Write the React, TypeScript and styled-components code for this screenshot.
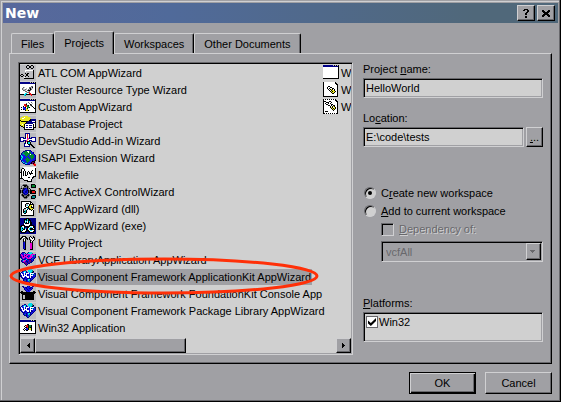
import React from 'react';
import styled, { createGlobalStyle, css } from 'styled-components';

const face = '#a0a0a4';
const paper = '#d0d0d0';
const light = '#d0d0d2';
const shade = '#68686c';
const ink = '#000';

const Global = createGlobalStyle`
  * { box-sizing: border-box; }
  html, body, #root { height: 100%; margin: 0; }
  body, button, input, select {
    font-family: "Liberation Sans", Arial, sans-serif;
    font-size: 11px;
    line-height: 14px;
    color: ${ink};
  }
  button, input, select { margin: 0; padding: 0; border-radius: 0; }
`;

const raised = css`
  background: ${face};
  border: 1px solid;
  border-color: ${light} ${ink} ${ink} ${light};
  box-shadow: inset -1px -1px ${shade};
`;

const sunken = css`
  border: 1px solid;
  border-color: ${shade} ${light} ${light} ${shade};
  box-shadow: inset 1px 1px ${ink}, inset -1px -1px ${face};
`;

const Dialog = styled.main`
  display: flex;
  flex-direction: column;
  min-height: 100%;
  padding: 3px;
  background: ${face};
  box-shadow: inset -1px -1px ${ink}, inset -2px -2px ${shade}, inset 1px 1px ${face}, inset 2px 2px ${light};
`;

const TitleBar = styled.header`
  display: flex;
  align-items: center;
  height: 20px;
  padding: 0 3px 0 2px;
  gap: 2px;
  background: linear-gradient(90deg, #58689c, #506a9a 30%, #50687a 85%);
`;

const Title = styled.h1`
  flex: 1;
  margin: 0;
  color: #fff;
  font: bold 14px/20px "DejaVu Sans", sans-serif;
`;

const CaptionButton = styled.button`
  ${raised}
  display: grid;
  place-items: center;
  width: 18px;
  height: 16px;
`;

const Content = styled.div`
  display: flex;
  flex: 1;
  flex-direction: column;
  padding: 8px 6px 4px;
`;

const Tabs = styled.div`
  display: flex;
  align-items: flex-end;
  padding-left: 2px;
`;

const Tab = styled.button<{ $active?: boolean }>`
  position: relative;
  height: ${p => (p.$active ? 23 : 20)}px;
  margin-bottom: ${p => (p.$active ? -1 : 0)}px;
  padding: 0 9px;
  background: ${face};
  border: 1px solid;
  border-color: ${light} ${ink} transparent ${light};
  border-bottom: 0;
  border-radius: 2px 2px 0 0;
  box-shadow: inset -1px 0 ${shade};
  z-index: ${p => (p.$active ? 1 : 0)};
`;

const Panel = styled.section`
  display: flex;
  gap: 10px;
  padding: 8px;
  border: 1px solid;
  border-color: ${light} ${ink} ${ink} ${light};
  box-shadow: inset -1px -1px ${shade};
`;

const ListArea = styled.div`
  position: relative;
  flex: 1;
  min-width: 0;
`;

const ListBox = styled.div`
  ${sunken}
  display: flex;
  flex-direction: column;
  padding: 1px;
  background: ${paper};
`;

const Columns = styled.ul`
  display: grid;
  grid-template-rows: repeat(16, 17px);
  grid-auto-flow: column;
  grid-auto-columns: 295px;
  gap: 0 8px;
  height: 274px;
  margin: 0;
  padding: 0;
  overflow: hidden;
  list-style: none;
`;

const Item = styled.li`
  display: flex;
  align-items: center;
  gap: 1px;
  white-space: nowrap;
`;

const ItemText = styled.span<{ $selected?: boolean }>`
  padding: 1px;
  background: ${p => (p.$selected ? face : 'transparent')};
`;

const ScrollBar = styled.div`
  display: flex;
  height: 15px;
  background: ${paper};
`;

const ScrollButton = styled.button`
  ${raised}
  display: grid;
  place-items: center;
  width: 15px;
`;

const ScrollTrack = styled.div`
  flex: 1;
`;

const ScrollThumb = styled.div`
  ${raised}
  width: 50%;
  height: 100%;
`;

const Marker = styled.svg`
  position: absolute;
  left: -9px;
  top: 194px;
  width: 310px;
  height: 40px;
  pointer-events: none;
`;

const Side = styled.form`
  display: flex;
  flex-direction: column;
  width: 180px;
`;

const Field = styled.div`
  display: flex;
  flex-direction: column;
  gap: 2px;
  margin-bottom: 13px;
`;

const FieldRow = styled.div`
  display: flex;
  gap: 2px;
`;

const TextBox = styled.input`
  ${sunken}
  flex: 1;
  width: 100%;
  min-width: 0;
  min-height: 20px;
  padding: 0 2px;
  background: ${paper};
  outline: 0;
`;

const Browse = styled.button`
  ${raised}
  width: 17px;
  height: 20px;
`;

const Choices = styled.div`
  display: flex;
  flex-direction: column;
  gap: 4px;
  margin: 26px 0 34px;
`;

const Choice = styled.label<{ $disabled?: boolean }>`
  display: flex;
  align-items: center;
  gap: 5px;
  color: ${p => (p.$disabled ? shade : ink)};
  text-shadow: ${p => (p.$disabled ? `1px 1px ${light}` : 'none')};
`;

const Radio = styled.input`
  appearance: none;
  display: grid;
  place-items: center;
  width: 12px;
  height: 12px;
  margin: 0 0 0 1px;
  background: ${paper};
  border: 1px solid;
  border-color: ${shade} ${light} ${light} ${shade};
  border-radius: 50%;
  box-shadow: inset 1px 1px ${ink};
  &:checked::after {
    content: "";
    width: 4px;
    height: 4px;
    border-radius: 50%;
    background: ${ink};
  }
`;

const Nested = styled.div`
  display: flex;
  flex-direction: column;
  gap: 5px;
  padding-left: 18px;
`;

const Check = styled.input`
  appearance: none;
  display: grid;
  place-items: center;
  width: 13px;
  height: 13px;
  ${sunken}
  background: ${face};
`;

const FlatCheck = styled.input`
  appearance: none;
  display: grid;
  place-items: center;
  width: 12px;
  height: 12px;
  background: #fff;
  border: 1px solid ${shade};
  &:checked::after {
    content: "";
    width: 8px;
    height: 8px;
    background: ${ink};
    clip-path: polygon(0 30%, 36% 62%, 100% 0, 100% 38%, 36% 100%, 0 68%);
  }
`;

const Combo = styled.div`
  ${sunken}
  display: grid;
  grid-template-columns: 1fr 15px;
  height: 21px;
  padding: 1px;
`;

const ComboSelect = styled.select`
  appearance: none;
  grid-area: 1 / 1 / 2 / 3;
  padding: 0 3px;
  background: transparent;
  border: 0;
  opacity: 1;
  color: ${shade};
`;

const ComboArrow = styled.span`
  ${raised}
  grid-area: 1 / 2;
  display: grid;
  place-items: center;
  pointer-events: none;
`;

const PlatformLabel = styled.div`
  margin-bottom: 2px;
`;

const PlatformBox = styled.div`
  ${sunken}
  height: 30px;
  padding: 2px;
  background: ${paper};
`;

const PlatformChoice = styled.label`
  display: flex;
  align-items: center;
  gap: 1px;
`;

const Actions = styled.footer`
  display: flex;
  justify-content: flex-end;
  gap: 9px;
  padding-top: 8px;
`;

const Action = styled.button<{ $primary?: boolean }>`
  ${raised}
  width: 67px;
  height: 22px;
  ${p => p.$primary && css`
    border-color: ${ink};
    box-shadow: inset 1px 1px ${light}, inset -1px -1px ${ink}, inset -2px -2px ${shade};
  `}
`;

const Pixels = styled.svg`
  flex: none;
`;

const palette: Record<string, string> = {
  K: '#000', W: '#fff', D: '#68686c', L: '#bcbcc0', N: '#000088', B: '#1010e8',
  C: '#00e0f0', R: '#e81010', Y: '#e8e820', M: '#e800d0', G: '#008830', T: '#008888', V: '#700070',
};

const art: Record<string, string[]> = {
  atl: [
    'LLLLLLLKKLLKKLLL', 'LLLLLLKLLKKLLKLL', 'LLLLLLKLLKKLLKLL', 'LLLLLLLKKLLKKLLL', 'LLLLLLLLLLLLLLLL',
    'LLLLLWWWWWWWWKLL', 'LLLLLWLLLLLLLKLL', 'LLLLLLLLLLLLLKLL', 'LLLLLKLKKLLLLKLL', 'LKKLLLKKLLLLLKLL',
    'KLLKLLKKLLLLLKLL', 'LKKLLKLLKLLLLKLL', 'LLLLWLLLLLLLLKLL', 'LLLLKKKKKKKKKKLL', 'LLLLLLLLLLLLLLLL', 'LLLLLLLLLLLLLLLL',
  ],
  cluster: [
    'NNNNNNNNNNLKLKLK', 'NNNNNNNNNNNNNNNK', 'WWWWWWWWWWWWWWWK', 'WWWWWWWWWWWWWWWK', 'WWWWWWWWWWWDDWWK', 'WWWDLWWWWDDLKWWK',
    'WWDLWWLWWDKLLWWK', 'WWDLLDLWDLKDWWWK', 'WWWDDLWDKKDWWWWK', 'WWWWWDDWLDWWWWWK', 'WWWWWWLDDRWWWWWK', 'WWWWWCCWWRRWWWWK',
    'KKKKCCKKKKRRKKKK', 'LLLLCTLLLLLRLLLL', 'LLLLLLLLLLLLLLLL', 'LLLLLLLLLLLLLLLL',
  ],
  custom: [
    'NNNNNNNNNNLKLKLK', 'NNNNNNNNNNNNNNNK', 'WWWWWWWWWWWWWWWK', 'WWWWWWWWDWWDWWWK', 'WWWWWWDWWDWWLWWK', 'WWWWRRKWWWKDWWWK',
    'WWWWRRRGKWDKWWWK', 'WWWKWRRGGWWLKWWK', 'WKWBBKWGGKWWWKWK', 'WWWBBBYKWWWWWWKK', 'WKWKBBYYWWWWWWWK', 'WWWWWKYYKWWWWWWK',
    'WWWWWWWWWWWWWWWK', 'KKKKKKKKKKKKKKKK', 'LLLLLLLLLLLLLLLL', 'LLLLLLLLLLLLLLLL',
  ],
  database: [
    'LLLYYYYYLLLLLLLL', 'LYYYWYYYYYLLLLLL', 'YYWWYYYYYYYLLLLL', 'YYYYYYYYYYKNNNNN', 'KYYYYYYYYKKNNNNN', 'YKKKKKKKNNNNWWWK',
    'YYYYYYKNNNNNNNNK', 'YYYYYKNNNNNNNWWK', 'YYWYKWWWWWWWWKWK', 'KYYYKWNNWNNNWKWK', 'LKKYKWWWWWWWWKWK', 'LLLKKWNNWNNNWKKK',
    'LLLLKWWWWWWWWKLL', 'LLLLKKKKKKKKKKLL', 'LLLLLLLLLLLLLLLL', 'LLLLLLLLLLLLLLLL',
  ],
  studio: [
    'LLLLLNNNNNLLLLLL', 'LLLLLNWRWNLLLLLL', 'LLLLLNWRWNLLLLLL', 'LLLLLNWRWNLLLLLL', 'NNNNLKWRWKLNNNNN', 'NWWNNNWMMNNNWWWN',
    'NWWWWWWMYWWWWWWN', 'NWWNNNMYWNNNWWWN', 'NNNNLKMKKKLNNNNN', 'LLLLLKWKCCKLLLLL', 'LLLLNNWKCCKLLLLL', 'LLLLNWWWKKKKLLLL',
    'LLLLNWWWWNLKKLLL', 'LLLLNNNNNNLLKKLL', 'LLLLLLLLLLLLLKKL', 'LLLLLLLLLLLLLLLL',
  ],
  globe: [
    'LLLLLNNNNNNLLLLL', 'LLLNNGGWWGBNLLLL', 'LLNTGGGGWGGBBNLL', 'LNTTGGGGGGGBBNLL', 'LNBTTGGGGBWGGBNL', 'NCBBBGGGBGGGGGBN',
    'NCCBBBGBBGGGGGBN', 'NTCBBBBGBBGGGGBN', 'NCTBBBGGGBBGGBBN', 'NCBBBGGGGGBGBBBN', 'LNBBBBGGGGBBBBNK', 'LNCBBBGGGBBBKKKL',
    'LLNCTBBGBBBKVVKL', 'LLLNNCCBBBNKVKRL', 'LLLLLNNNNNLLLRRR', 'LLLLLLLLLLLLLLRR',
  ],
  make: [
    'LLLWWWWWWWWWWWWW', 'LLKKWWWWWWWWWWWK', 'LKWWKWWWWWWWWWWK', 'LKWWKWWWWWWWKWWK', 'LKWKWKWWKWWKWWWK', 'KKWKWKWKWKWKWWWK',
    'WKWKWKWKWKKKKWWK', 'WKWKWKWKWWKWWWWK', 'WKWKWKKWWWWWWWWK', 'WKWWWWWWWWWWWKKK', 'WKWWWWWWKKWWKKLL', 'KKKWWWWWWWWWKLLL',
    'LLLKWWWWWWWKLLLL', 'LLLLKKKKWWWKLLLL', 'LLLLLLLKKKKKLLLL', 'LLLLLLLLLLLLLLLL',
  ],
  activex: [
    'LLLDDDDLLLLKKKKL', 'LLDKKKKDLLLKGGGK', 'LDLLKKDKDLLKGGGK', 'LDLDDDDKDLLKKKKK', 'DKDKNNBKDKLLLLLL', 'DLDNNBBNDLKLLLLL',
    'KDKNBBNNKDKKKKKL', 'KDKBBNNBKDKKRRRK', 'KDKNBNNBKDKKRRRK', 'DLDNNBBNDLKKKKKK', 'LDKDNNNDKDLLLLLL', 'LDKKDDDKKDLLKKKK',
    'LLDKDDKDDLLKTTTK', 'LLLDKKKDLLLKTTTK', 'LLLLDDDLLLLKKKKL', 'LLLLLLLLLLLLLLLL',
  ],
  dll: [
    'LKKKKKKKKKKLLLLL', 'LKWWWWWWWWKKLLLL', 'LKWWWWKKKWKWKLLL', 'LKWWWKLLWKKKKKLL', 'LKWWWKLCWKYYWKLL', 'LKWWWKWWKYYKWKLL',
    'LKWWWWKKKYYKKKLL', 'LKWWKKWCKKYYYKLL', 'LKWKLLWKWKKYKWLL', 'LKWKLCKWWWWKWKLL', 'LKWKKTKWWWWWWKLL', 'LKWKCTKWWWWWWKLL',
    'LKWWKKWWWWWWWKLL', 'LKWWWWWWWWWWWKLL', 'LKKKKKKKKKKKKKLL', 'LLLLLLLLLLLLLLLL',
  ],
  exe: [
    'NNNNNNKKKNNNNNNN', 'NNNNKKKCKKNNNNNN', 'NNNNKCKCKKKNNNNN', 'NNNNKWCWKCKNNNNN', 'NNNNKCKWKCKKNNNN', 'NNNNWKKKKWKKNNNN',
    'NNNKWWWWWWKKNNNN', 'NKKKKWWWWKKKKKNN', 'KKWWKKKKKKWWWKKN', 'KCCWKNNKKWCCWKKN', 'KCKCKCNKWCKKKWKN', 'KCCKKWKKWCKKKKKN',
    'KCKWWWKKKWCCWWKN', 'KKWWWKKNKKWWWKKN', 'NKKKKKNNNKKKKKNN', 'NNNNNNNNNNNNNNNN',
  ],
  utility: [
    'LLLLLLLLLLLLLLLL', 'LLKKKKLLLLKLLKLL', 'LKKWWKKLLKWKLKKL', 'KKWDDDKKLKWWKWKL', 'KLLKWKLKLKDWWWKL', 'LLLKWKLLLLKDWKLL',
    'LLLKDKLLLLKWKLLL', 'LLLNBKLLLLKDKLLL', 'LLLNBKLLLLMMKLLL', 'LLLNBKLLLLMMKLLL', 'LLLNBKLLLLMMKLLL', 'LLLNBKLLLLMMKLLL',
    'LLLNBKLLLLMMKLLL', 'LLLNBKLLLLMMKLLL', 'LLLLKKLLLLKKKLLL', 'LLLLLLLLLLLLLLLL',
  ],
  library: [
    'LLNNNLLLNCCCLLLL', 'LNBBCNLNCCCCTLLL', 'NMBBMMBMMMCMMMMN', 'NMMBMNMMBBMMCBTN', 'NBMNMMMNBBMMMBTN', 'NNMMMBMMBMMMBBBN',
    'LNBMBNBMMMMNTBNL', 'LLNNNBCNNNNBBNLL', 'LNBCMMNBBVVNBNLL', 'LNBMMBNNBVVNNLLL', 'LLNNVVBNVBNNLLLL', 'LLLLNVVBNNLLLLLL',
    'LLLLLNVNLLLLLLLL', 'LLLLLLNLLLLLLLLL', 'LLLLLLLLLLLLLLLL', 'LLLLLLLLLLLLLLLL',
  ],
  vcf: [
    'LLLLLLLLLCCCLLLL', 'LLLLNNLLCCCCTLLL', 'LLNBCCNLCCCCTKLL', 'LNBCWCNBLCCTKBLL', 'NWBBWBWWWBWWWWNN', 'NWWBWNWNBBWNCBTN',
    'NBWNWWWNBBWWWBBN', 'NNWWWBWWWBWNBBBN', 'LNBWBNBWWNWNNBNL', 'LLNNNBBNNNNBBNLL', 'LLLNBBNBCCNBNLLL', 'LLLNBTNBCTNNLLLL',
    'LLLLNNNBBTNLLLLL', 'LLLLLLNBTNLLLLLL', 'LLLLLLLNNLLLLLLL', 'LLLLLLLLLLLLLLLL',
  ],
  hat: [
    'LLNNLLLNBNLLNNLL', 'LLLNBNNBBBNNBLLL', 'LLLLNBNBBNNBNLLL', 'LLLLNBBNBBBNLLLL', 'LLLLLNBBNBBLLLLL', 'LKKLLLNBBBLLLKKL',
    'KKKKKKKKKKKKKKKK', 'LKKKKKKKKKKKKKKL', 'LLKKKKKKKKKKKKLL', 'LLKLLKKKKKKKKKLL', 'LLKLLKKKKKKKKKLL', 'LLKLLKKKKKKKKKLL',
    'LLKLLKKKKKKKKKLL', 'LLKKKKKKKKKKKKLL', 'LLLLLLLLLLLLLLLL', 'LLLLLLLLLLLLLLLL',
  ],
  win32: [
    'NNNNNNNNNNNLKLKK', 'NNNNNNNNNNNNNNNK', 'WWWWWWWWWWWWWWWK', 'WWWWWWWWWWWWWWWK', 'WWWWWWWKKWWWWWWK', 'WWWWWKRRKGGKWWWK',
    'WWWWKWRRKGGKWWWK', 'WWWWWKKRKGKKWWWK', 'WWWWKWBBKYYKWWWK', 'WWWKWKBBKYYKWWWK', 'WWWWKWKKWWWKWWWK', 'WWWWWWWWWWWWWWWK',
    'WWWWWWWWWWWWWWWK', 'KKKKKKKKKKKKKKKK', 'LLLLLLLLLLLLLLLL', 'LLLLLLLLLLLLLLLL',
  ],
  window: [
    'NNNNNNNNNNLKLKLK', 'NNNNNNNNNNNNNNNK', 'WWWWWWWWWWWWWWWK', 'WWWWWWWWWWWWWWWK', 'WWWWWWWWWWWWWWWK', 'WWWWWWWWWWWWWWWK',
    'WWWWWWWWWWWWWWWK', 'WWWWWWWWWWWWWWWK', 'WWWWWWWWWWWWWWWK', 'WWWWWWWWWWWWWWWK', 'WWWWWWWWWWWWWWWK', 'WWWWWWWWWWWWWWWK',
    'WWWWWWWWWWWWWWWK', 'KKKKKKKKKKKKKKKK', '................', '................',
  ],
  gears: [
    'KWWWWWWWWWWWK...', 'KWWWWWWWWWWWKK..', 'KWWWWWWWWWWWWKK.', 'KWWWWWWWWWWWWWK.', 'KWWWWKKWWWWWWWK.', 'KWWWKWWKKWWWWWK.',
    'KWWWKWKWWKKWWWK.', 'KWWWWKWKYKWKWWK.', 'KWWWWWKWKYYKWWK.', 'KWWWWWWKYKYYKWK.', 'KWWWWWWWKYYKWWK.', 'KWWWWWWWWKKWWWK.',
    'KWWWWWWWWWWWWWK.', 'KWWWWWWWWWWWWWK.', 'KKKKKKKKKKKKKKK.', '................',
  ],
  film: [
    'KWKWKWKWKWKWK...', 'KWWWWWWWWWWWKK..', 'KKKWWWKKWWWWWKK.', 'KWWKKKWWKWWWWWK.', 'KWKWWKWKWWWWWWK.', 'KWWKKWWWKKWWWWK.',
    'KWWWWKKWKWKKWWK.', 'KWWWWWWKWKYKWWK.', 'KWWWWWWKYKWYKWK.', 'KWWWWWWWKYKYKWK.', 'KWWWWWWWWKYKWWK.', 'KWWWWWWWWWKWWWK.',
    'KWKKKWWWWWWWWWK.', 'KWWWWWWWWWWWWWK.', 'KKWKWKWKWKWKWKK.', '................',
  ],
  help: ['..KKKK..', '.KK..KK.', '.....KK.', '....KK..', '...KK...', '...KK...', '........', '...KK...', '...KK...'],
  close: ['KK....KK', 'KKK..KKK', '.KKKKKK.', '..KKKK..', '.KKKKKK.', 'KKK..KKK', 'KK....KK'],
  left: ['...K', '..KK', '.KKK', '..KK', '...K'],
  right: ['K...', 'KK..', 'KKK.', 'KK..', 'K...'],
  down: ['DDDDD..', '.DDD...', '..D....'],
};

function PixelIcon({ name }: { name: string }) {
  const rows = art[name];
  const width = rows[0].length;
  return (
    <Pixels width={width} height={rows.length} viewBox={`0 0 ${width} ${rows.length}`} shapeRendering="crispEdges" aria-hidden="true">
      {rows.flatMap((row, y) =>
        Array.from(row.matchAll(/([A-Z])\1*/g)).map(run => (
          <rect key={`${y}-${run.index}`} x={run.index} y={y} width={run[0].length} height={1} fill={palette[run[1]]} />
        )),
      )}
    </Pixels>
  );
}

const templates: [string, string][] = [
  ['atl', 'ATL COM AppWizard'],
  ['cluster', 'Cluster Resource Type Wizard'],
  ['custom', 'Custom AppWizard'],
  ['database', 'Database Project'],
  ['studio', 'DevStudio Add-in Wizard'],
  ['globe', 'ISAPI Extension Wizard'],
  ['make', 'Makefile'],
  ['activex', 'MFC ActiveX ControlWizard'],
  ['dll', 'MFC AppWizard (dll)'],
  ['exe', 'MFC AppWizard (exe)'],
  ['utility', 'Utility Project'],
  ['library', 'VCF LibraryApplication AppWizard'],
  ['vcf', 'Visual Component Framework ApplicationKit AppWizard'],
  ['hat', 'Visual Component Framework FoundationKit Console App'],
  ['vcf', 'Visual Component Framework Package Library AppWizard'],
  ['win32', 'Win32 Application'],
  ['window', 'W'],
  ['gears', 'W'],
  ['film', 'W'],
];

export default function App() {
  return (
    <Dialog role="dialog" aria-labelledby="title">
      <Global />
      <TitleBar>
        <Title id="title">New</Title>
        <CaptionButton aria-label="Help"><PixelIcon name="help" /></CaptionButton>
        <CaptionButton aria-label="Close"><PixelIcon name="close" /></CaptionButton>
      </TitleBar>
      <Content>
        <Tabs role="tablist">
          <Tab role="tab">Files</Tab>
          <Tab role="tab" $active aria-selected="true">Projects</Tab>
          <Tab role="tab">Workspaces</Tab>
          <Tab role="tab">Other Documents</Tab>
        </Tabs>
        <Panel role="tabpanel">
          <ListArea>
            <ListBox>
              <Columns role="listbox" aria-label="Project types">
                {templates.map(([icon, label], i) => (
                  <Item key={i} role="option" aria-selected={i === 12}>
                    <PixelIcon name={icon} />
                    <ItemText $selected={i === 12}>{label}</ItemText>
                  </Item>
                ))}
              </Columns>
              <ScrollBar>
                <ScrollButton aria-label="Scroll left"><PixelIcon name="left" /></ScrollButton>
                <ScrollTrack><ScrollThumb /></ScrollTrack>
                <ScrollButton aria-label="Scroll right"><PixelIcon name="right" /></ScrollButton>
              </ScrollBar>
            </ListBox>
            <Marker viewBox="0 0 310 40" aria-hidden="true">
              <ellipse cx="155" cy="20" rx="153" ry="17" fill="none" stroke="#ff3008" strokeWidth="3" />
            </Marker>
          </ListArea>
          <Side>
            <Field>
              <label htmlFor="name">Project <u>n</u>ame:</label>
              <TextBox id="name" defaultValue="HelloWorld" />
            </Field>
            <Field>
              <label htmlFor="location">Lo<u>c</u>ation:</label>
              <FieldRow>
                <TextBox id="location" defaultValue="E:\code\tests" />
                <Browse type="button" aria-label="Browse"><u>.</u>..</Browse>
              </FieldRow>
            </Field>
            <Choices>
              <Choice><Radio type="radio" name="workspace" defaultChecked /><span>C<u>r</u>eate new workspace</span></Choice>
              <Choice><Radio type="radio" name="workspace" /><span><u>A</u>dd to current workspace</span></Choice>
              <Nested>
                <Choice $disabled><Check type="checkbox" disabled /><span><u>D</u>ependency of:</span></Choice>
                <Combo>
                  <ComboSelect disabled aria-label="Parent project"><option>vcfAll</option></ComboSelect>
                  <ComboArrow><PixelIcon name="down" /></ComboArrow>
                </Combo>
              </Nested>
            </Choices>
            <PlatformLabel id="platforms"><u>P</u>latforms:</PlatformLabel>
            <PlatformBox role="group" aria-labelledby="platforms">
              <PlatformChoice><FlatCheck type="checkbox" defaultChecked />Win32</PlatformChoice>
            </PlatformBox>
          </Side>
        </Panel>
        <Actions>
          <Action $primary>OK</Action>
          <Action>Cancel</Action>
        </Actions>
      </Content>
    </Dialog>
  );
}
